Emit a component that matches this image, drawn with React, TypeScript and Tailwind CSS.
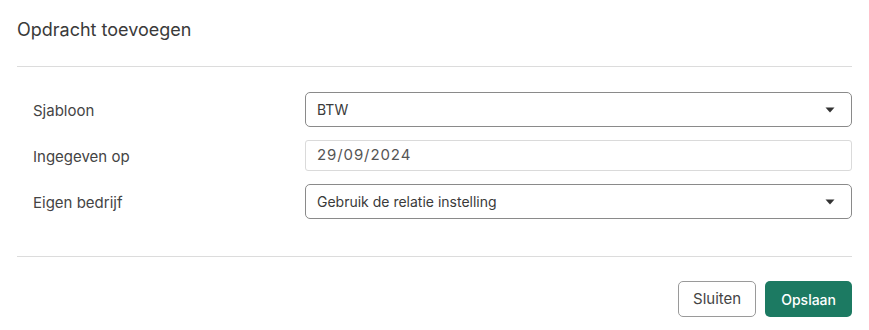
import React from 'react'

function Caret() {
  return (
    <svg width="10" height="6" viewBox="0 0 10 6" className="text-[#333]">
      <path d="M0.5 0.5 L9.5 0.5 L5 5.5 Z" fill="currentColor" />
    </svg>
  )
}

const rows = [
  { label: 'Sjabloon', value: 'BTW', kind: 'select' },
  { label: 'Ingegeven op', value: '29/09/2024', kind: 'date' },
  { label: 'Eigen bedrijf', value: 'Gebruik de relatie instelling', kind: 'select' },
]

export default function App() {
  return (
    <div className="w-[869px] h-[330px] bg-white px-[17px] text-[#444] font-['Inter','Liberation_Sans',sans-serif]">
      {/* Header */}
      <div className="h-[67px] border-b border-[#dcdcdc] flex items-center">
        <h2 className="text-[18px] text-[#3a3a3a] font-normal -mt-[7px]">Opdracht toevoegen</h2>
      </div>

      {/* Body */}
      <div className="pt-[25px] pb-[37px] border-b border-[#dcdcdc] flex flex-col gap-[13px]">
        {rows.map((row) => (
          <div key={row.label} className="flex items-center">
            <label className="w-[288px] pl-[16px] mt-[3px] text-[15px] text-[#444]">{row.label}</label>
            {row.kind === 'select' ? (
              <div className="flex-1 h-[35px] border border-[#8a8a8a] rounded-[5px] flex items-center justify-between pl-[11px] pr-[16px] text-[14px] text-[#3a3a3a]">
                <span>{row.value}</span>
                <Caret />
              </div>
            ) : (
              <div className="flex-1 h-[31px] border border-[#dadada] rounded-[3px] flex items-center pl-[11px] text-[15px] tracking-[0.9px] text-[#555]">
                {row.value}
              </div>
            )}
          </div>
        ))}
      </div>

      {/* Footer */}
      <div className="pt-[24px] flex justify-end gap-[9px]">
        <button className="h-[36px] px-[14px] rounded-[5px] border border-[#9a9a9a] bg-white text-[15px] text-[#444]">
          Sluiten
        </button>
        <button className="h-[36px] px-[16px] rounded-[5px] bg-[#1c7a62] text-[14px] text-white font-medium">
          Opslaan
        </button>
      </div>
    </div>
  )
}
